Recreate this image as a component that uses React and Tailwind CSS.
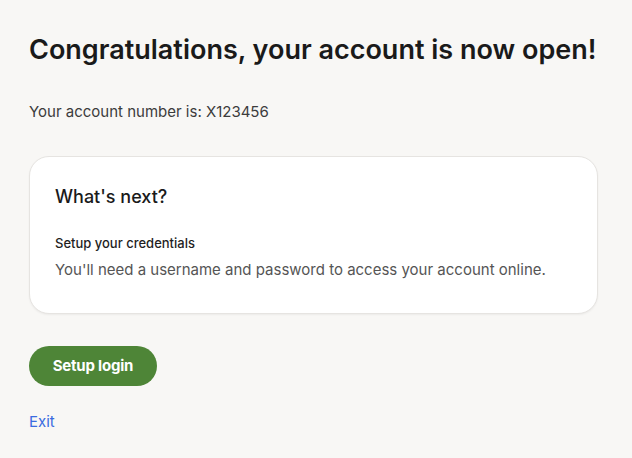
import React from 'react';

export default function App() {
    return (
        <div className="min-h-screen bg-[#f8f7f5] px-[29px] pt-[30px] pb-8 font-['Inter',sans-serif]">
            <h1 className="whitespace-nowrap text-[27px] font-semibold leading-[40px] text-[#1a1a1a]">
                Congratulations, your account is now open!
            </h1>
            <p className="mt-[30px] text-[15px] leading-[24px] text-[#3c3c3c]">Your account number is: X123456</p>

            <div className="mt-[32px] w-[569px] rounded-[20px] border border-[#e6e4e1] bg-white px-[25px] pt-[26px] pb-[31px] shadow-[0_1px_2px_rgba(0,0,0,0.05)]">
                <h2 className="text-[18px] font-medium leading-[28px] text-[#1a1a1a]">What's next?</h2>
                <h3 className="mt-[22px] text-[13px] font-medium leading-[20px] text-[#1f1f1f]">Setup your credentials</h3>
                <p className="mt-[5px] text-[15px] leading-[24px] text-[#555555]">
                    You'll need a username and password to access your account online.
                </p>
            </div>

            <button className="mt-[32px] flex h-[40px] w-[128px] items-center justify-center rounded-full bg-[#4e8537] text-[15px] font-bold tracking-[-0.2px] text-white">
                Setup login
            </button>

            <a href="#" className="mt-[24px] block text-[15px] leading-[24px] text-[#3a6be0]">Exit</a>
        </div>
    );
}
